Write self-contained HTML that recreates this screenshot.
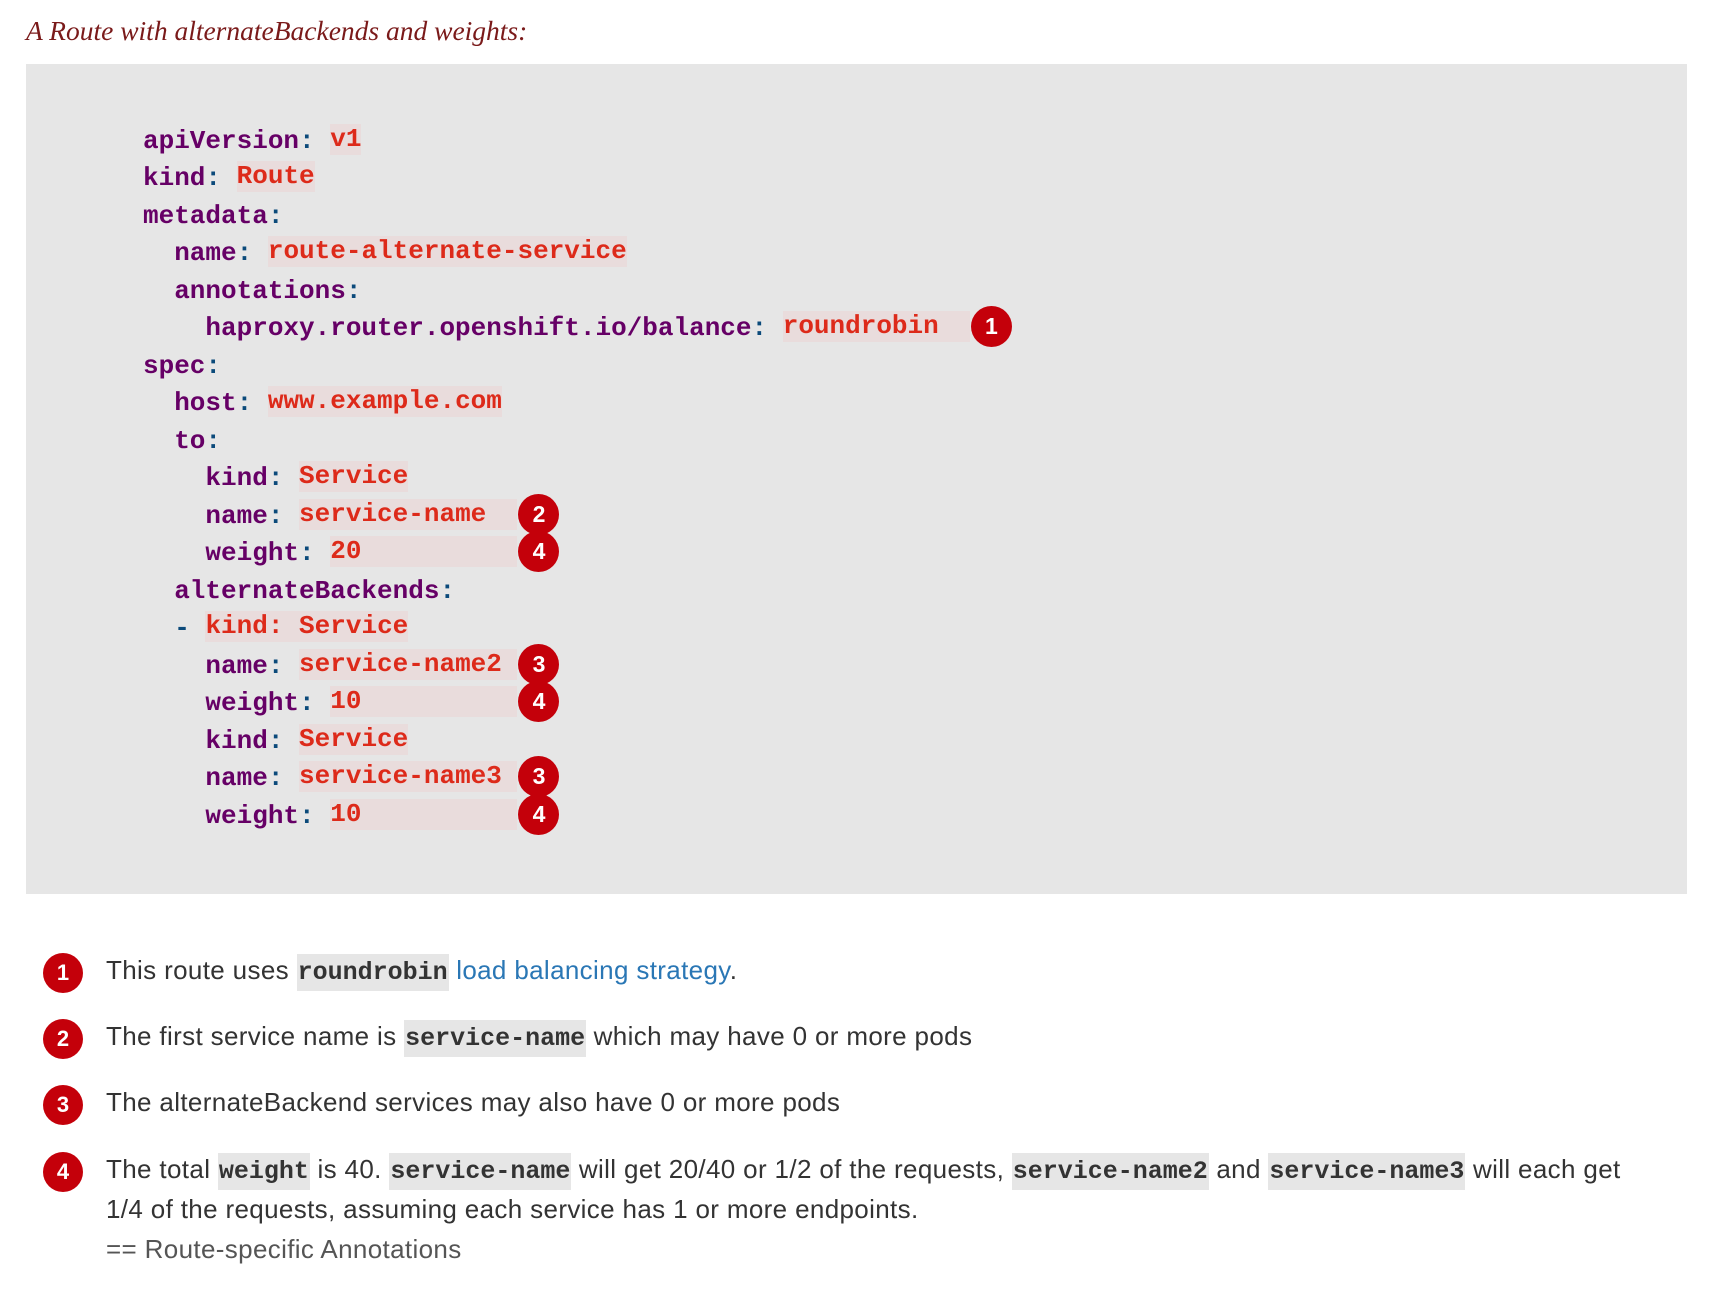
<!DOCTYPE html>
<html><head><meta charset="utf-8"><style>
*{margin:0;padding:0;box-sizing:border-box}
body{width:1716px;height:1300px;background:#fff;position:relative;overflow:hidden;font-family:"Liberation Sans",sans-serif}
.title{position:absolute;left:26px;top:15px;font-family:"Liberation Serif",serif;font-style:italic;font-size:27.5px;color:#7a1a1a}
.box{position:absolute;left:26px;top:64px;width:1661px;height:830px;background:#e6e6e6}
.l{position:absolute;left:143px;height:38px;line-height:38px;font-family:"Liberation Mono",monospace;font-weight:bold;font-size:26px;white-space:pre;color:#660066}
.c{color:#0b4a7a}
.v{color:#dd2a1a;background:#e9dcdc;display:inline-block;height:31px;line-height:31px;vertical-align:middle;margin-top:-4px}
.co{display:inline-block;width:41px;height:41px;border-radius:50%;background:#c4000a;color:#fff;font-family:"Liberation Sans",sans-serif;font-weight:bold;font-size:23px;text-align:center;line-height:41px;vertical-align:middle;margin-top:-4px;margin-left:1px}
.row{position:absolute;left:106px;font-size:26px;letter-spacing:0.35px;color:#333;white-space:nowrap;line-height:40px}
.n{position:absolute;left:43px;width:40px;height:40px;border-radius:50%;background:#c4000a;color:#fff;font-weight:bold;font-size:22px;text-align:center;line-height:40px}
code{font-family:"Liberation Mono",monospace;font-weight:bold;font-size:25px;letter-spacing:0;background:#e6e6e6;padding:4px 1px}
a{color:#2a77b5;text-decoration:none}
</style></head><body>
<div class="title">A Route with alternateBackends and weights:</div>
<div class="box"></div>
<div class="l" style="top:122px">apiVersion<span class="c">:</span> <span class="v">v1</span></div>
<div class="l" style="top:159px">kind<span class="c">:</span> <span class="v">Route</span></div>
<div class="l" style="top:197px">metadata<span class="c">:</span></div>
<div class="l" style="top:234px">  name<span class="c">:</span> <span class="v">route-alternate-service</span></div>
<div class="l" style="top:272px">  annotations<span class="c">:</span></div>
<div class="l" style="top:309px">    haproxy.router.openshift.io/balance<span class="c">:</span> <span class="v">roundrobin  </span><span class="co">1</span></div>
<div class="l" style="top:347px">spec<span class="c">:</span></div>
<div class="l" style="top:384px">  host<span class="c">:</span> <span class="v">www.example.com</span></div>
<div class="l" style="top:422px">  to<span class="c">:</span></div>
<div class="l" style="top:459px">    kind<span class="c">:</span> <span class="v">Service</span></div>
<div class="l" style="top:497px">    name<span class="c">:</span> <span class="v">service-name  </span><span class="co">2</span></div>
<div class="l" style="top:534px">    weight<span class="c">:</span> <span class="v">20          </span><span class="co">4</span></div>
<div class="l" style="top:572px">  alternateBackends<span class="c">:</span></div>
<div class="l" style="top:609px">  <span class="c">-</span> <span class="v">kind: Service</span></div>
<div class="l" style="top:647px">    name<span class="c">:</span> <span class="v">service-name2 </span><span class="co">3</span></div>
<div class="l" style="top:684px">    weight<span class="c">:</span> <span class="v">10          </span><span class="co">4</span></div>
<div class="l" style="top:722px">    kind<span class="c">:</span> <span class="v">Service</span></div>
<div class="l" style="top:759px">    name<span class="c">:</span> <span class="v">service-name3 </span><span class="co">3</span></div>
<div class="l" style="top:797px">    weight<span class="c">:</span> <span class="v">10          </span><span class="co">4</span></div>

<div class="n" style="top:953px">1</div>
<div class="row" style="top:950px">This route uses <code>roundrobin</code> <a>load balancing strategy</a>.</div>
<div class="n" style="top:1019px">2</div>
<div class="row" style="top:1016px">The first service name is <code>service-name</code> which may have 0 or more pods</div>
<div class="n" style="top:1085px">3</div>
<div class="row" style="top:1082px">The alternateBackend services may also have 0 or more pods</div>
<div class="n" style="top:1152px">4</div>
<div class="row" style="top:1149px">The total <code>weight</code> is 40. <code>service-name</code> will get 20/40 or 1/2 of the requests, <code>service-name2</code> and <code>service-name3</code> will each get</div>
<div class="row" style="top:1189px">1/4 of the requests, assuming each service has 1 or more endpoints.</div>
<div class="row" style="top:1229px;color:#555">== Route-specific Annotations</div>
</body></html>
